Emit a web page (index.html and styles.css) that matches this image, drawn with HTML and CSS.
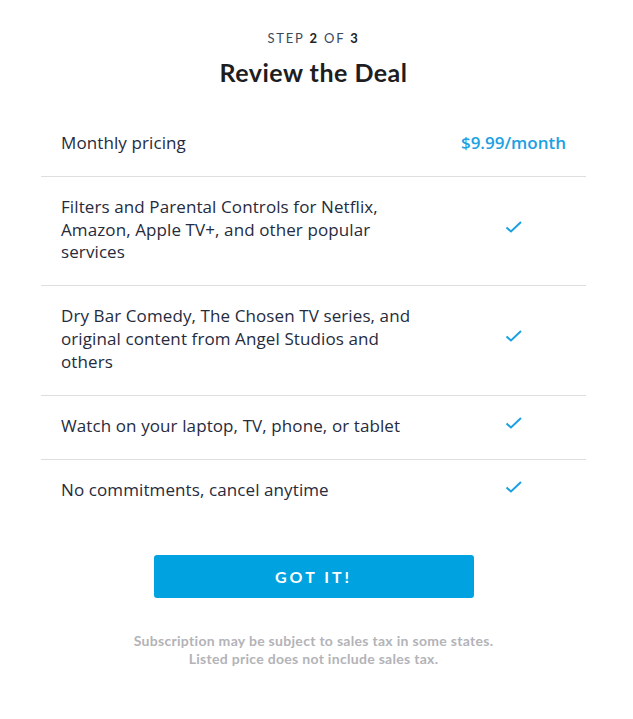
FILE: index.html
```html
<!DOCTYPE html>
<html>
<head>
<meta charset="utf-8">
<link rel="stylesheet" href="styles.css">
</head>
<body>
<div class="page">
  <header class="head">
    <div class="step">STEP <b>2</b> OF <b>3</b></div>
    <h1 class="title">Review the Deal</h1>
  </header>
  <div class="table">
    <div class="row first">
      <div class="label">Monthly pricing</div>
      <div class="price">$9.99/month</div>
    </div>
    <div class="row">
      <div class="label">Filters and Parental Controls for Netflix, Amazon, Apple TV+, and other popular services</div>
      <div class="check"><svg width="18" height="14" viewBox="0 0 18 14"><path d="M1.5 7.5 L6 11.5 L16 2" fill="none" stroke="#1ba1e2" stroke-width="2"/></svg></div>
    </div>
    <div class="row">
      <div class="label">Dry Bar Comedy, The Chosen TV series, and original content from Angel Studios and others</div>
      <div class="check"><svg width="18" height="14" viewBox="0 0 18 14"><path d="M1.5 7.5 L6 11.5 L16 2" fill="none" stroke="#1ba1e2" stroke-width="2"/></svg></div>
    </div>
    <div class="row">
      <div class="label">Watch on your laptop, TV, phone, or tablet</div>
      <div class="check"><svg width="18" height="14" viewBox="0 0 18 14"><path d="M1.5 7.5 L6 11.5 L16 2" fill="none" stroke="#1ba1e2" stroke-width="2"/></svg></div>
    </div>
    <div class="row last">
      <div class="label">No commitments, cancel anytime</div>
      <div class="check"><svg width="18" height="14" viewBox="0 0 18 14"><path d="M1.5 7.5 L6 11.5 L16 2" fill="none" stroke="#1ba1e2" stroke-width="2"/></svg></div>
    </div>
  </div>
  <div class="actions">
    <button class="btn">GOT IT!</button>
  </div>
  <p class="note">Subscription may be subject to sales tax in some states.<br>Listed price does not include sales tax.</p>
</div>
</body>
</html>
```
FILE: styles.css
```css
html, body { margin: 0; padding: 0; background: #fff; }
body { font-family: "Open Sans", Lato, sans-serif; color: #222a3a; }
.page { width: 545px; margin-left: 41px; padding-top: 29px; }
.head { text-align: center; font-family: Lato, sans-serif; }
.step { font-size: 13px; letter-spacing: 1.8px; color: #3a4a5c; line-height: 18px; }
.step b { font-weight: 700; color: #222; }
.title { margin: 10px 0 0; font-size: 25px; font-weight: 700; color: #1d1d22; line-height: 30px; letter-spacing: 0.5px; }
.table { margin-top: 26px; }
.row { display: grid; grid-template-columns: 1fr 104px; align-items: center; padding: 19px 20px 21.3px; border-bottom: 1px solid #dedede; font-size: 17px; line-height: 22.7px; letter-spacing: 0.1px; }
.row.first { display: flex; justify-content: space-between; }
.row.last { border-bottom: none; }
.label { max-width: 352px; color: #262b3d; }
.price { color: #1ba1e2; font-weight: 600; letter-spacing: 0; }
.check { display: flex; justify-content: center; margin-bottom: 6px; }
.check svg { display: block; }
.actions { display: flex; justify-content: center; margin-top: 32px; }
.btn { width: 320px; height: 43px; border: none; border-radius: 3px; background: #00a3e0; color: #fff; font-family: Lato, sans-serif; font-size: 16px; font-weight: 700; letter-spacing: 3px; }
.note { margin: 34px 0 0; text-align: center; font-family: Lato, sans-serif; font-size: 14px; line-height: 18px; font-weight: 700; color: #b3b3b8; letter-spacing: 0.3px; }
```
